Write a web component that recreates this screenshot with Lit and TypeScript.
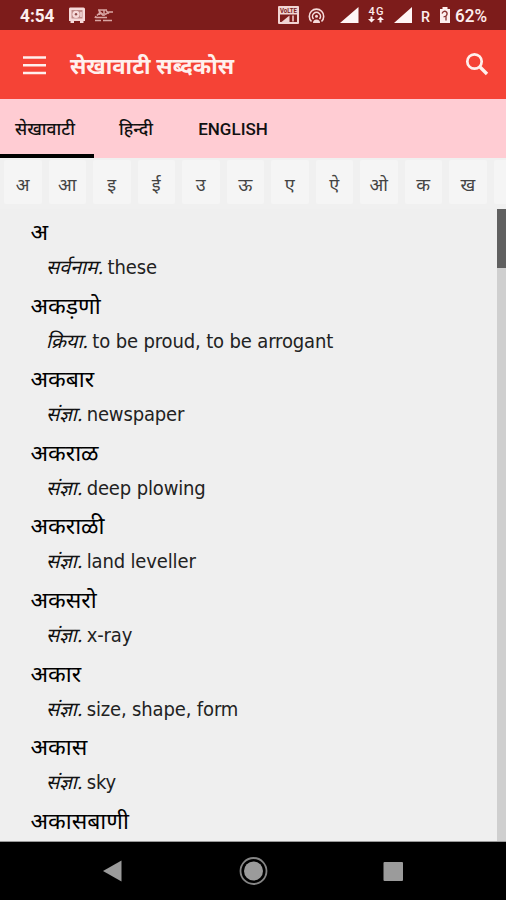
import { LitElement, html, css } from 'lit';
import { customElement } from 'lit/decorators.js';

const LETTERS = ['अ', 'आ', 'इ', 'ई', 'उ', 'ऊ', 'ए', 'ऐ', 'ओ', 'क', 'ख', ''];
const ENTRIES = [
  ['अ', 'सर्वनाम.', 'these'],
  ['अकड़णो', 'क्रिया.', 'to be proud, to be arrogant'],
  ['अकबार', 'संज्ञा.', 'newspaper'],
  ['अकराळ', 'संज्ञा.', 'deep plowing'],
  ['अकराळी', 'संज्ञा.', 'land leveller'],
  ['अकसरो', 'संज्ञा.', 'x-ray'],
  ['अकार', 'संज्ञा.', 'size, shape, form'],
  ['अकास', 'संज्ञा.', 'sky'],
  ['अकासबाणी', '', ''],
];

@customElement('status-bar')
class StatusBar extends LitElement {
  static styles = css`
    :host { display: block; height: 30px; background: #7d1c1b; }
    svg { display: block; }
    text { font-family: Roboto, sans-serif; fill: #fdeeee; font-weight: 500; }
    .time { font-size: 18px; font-weight: 700; }
    .battery { font-size: 18.500px; }
    .small { font-size: 11px; }
    .roam { font-size: 15px; }
    .volte { font-size: 6.500px; font-weight: 700; fill: #7d1c1b; }
  `;
  render() {
    return html`<svg width="506" height="30" viewBox="0 0 506 30">
      <text class="time" x="20" y="22" textLength="34.500" lengthAdjust="spacingAndGlyphs">4:54</text>
      <g fill="#f6dada">
        <path d="M70 7.500h13.500a1.500 1.500 0 0 1 1.500 1.500v12h-1.500v2h-3.500v-2h-6v2h-3.500v-2H69V9a1.500 1.500 0 0 1 1-1.500z"/>
        <path d="M71.500 10h11v8.500h-11z" fill="#c08b89"/>
        <circle cx="76" cy="14.300" r="3.600"/><circle cx="76" cy="14.300" r="1.200" fill="#8f4a49"/>
        <path d="M81 12v5" stroke="#f6dada" stroke-width="1.500"/>
      </g>
      <g fill="none" stroke="#d9a6a4" stroke-width="1.500">
        <path d="M98 10h9M99.500 10v5M97 15.500q3-4.500 6 0M104 10v6M105 14.500l4-2.500h4M96 17.500h11M95 20.500h6M103 20.500h9"/>
        <path d="M99 11l4 3.500M106 10.500l3 3M96 16l-1 2" />
      </g>
      <rect x="278" y="6" width="21" height="18" rx="1" fill="#f2d4d3"/>
      <text class="volte" x="280" y="12.500" textLength="17" lengthAdjust="spacingAndGlyphs">VoLTE</text>
      <path d="M280 14.500h17v7.500h-17z" fill="#7d1c1b"/>
      <path d="M281.500 22l8-6.500V22z" fill="#f2d4d3"/><path d="M292 15.500h2v6h-2z" fill="#d9a6a4"/>
      <g fill="none" stroke="#f6dada" stroke-width="1.600">
        <path d="M311.500 21.500a7.200 7.200 0 1 1 10 0"/><path d="M313.500 19a4 4 0 1 1 6 0"/>
      </g>
      <circle cx="316.500" cy="16.300" r="1.500" fill="#f6dada"/>
      <path d="M313 23q0-3.500 3.500-3.500T320 23z" fill="#f6dada"/>
      <path d="M340 23L358.500 7v16zM394 23L412 7v16z" fill="#fff6f6"/>
      <text class="small" x="368.500" y="14.500" textLength="15">4G</text>
      <path d="M371.500 22.500l-3.500-3.500h2.500v-2.500h2V19h2.500zM380.500 16.500l-3.500 3.500h2.500v2.500h2V20h2.500z" fill="#fdeeee"/>
      <text class="roam" x="421" y="21.500" textLength="9" lengthAdjust="spacingAndGlyphs">R</text>
      <path d="M442.500 7h5v2h2.500v14h-10V9h2.500z" fill="#fdeeee"/>
      <path d="M442 13.500q2-3.500 4.500-1.500 1.500 2-.5 4l-2.500 1M446 16.500v4" fill="none" stroke="#8a3433" stroke-width="1.300"/>
      <text class="battery" x="455" y="22" textLength="32" lengthAdjust="spacingAndGlyphs">62%</text>
    </svg>`;
  }
}

@customElement('nav-bar')
class NavBar extends LitElement {
  static styles = css`
    :host { display: block; height: 58px; background: #000; flex: none; }
    svg { display: block; }
  `;
  render() {
    return html`<svg width="506" height="58" viewBox="0 0 506 58" fill="#9b9b9b">
      <path d="M103 29L121.500 18.500v21z"/>
      <circle cx="253.500" cy="29" r="9.500"/>
      <circle cx="253.500" cy="29" r="13" fill="none" stroke="#858585" stroke-width="1.800"/>
      <rect x="383.500" y="20" width="19.500" height="19" rx="1"/>
    </svg>`;
  }
}

@customElement('app-root')
class AppRoot extends LitElement {
  static styles = css`
    :host {
      display: flex; flex-direction: column; width: 506px; height: 900px; overflow: hidden;
      background: #efefef; color: #111;
      font-family: 'Noto Sans', 'Noto Sans Devanagari', sans-serif;
    }
    status-bar, header, .tabs, .letters { flex: none; }
    header {
      height: 69px; box-sizing: border-box; background: #f54336; display: flex; align-items: center;
      padding: 0 17px 0 23px; color: #fff0ed;
    }
    header svg { display: block; flex: none; }
    header svg:last-child { margin-bottom: 2px; }
    h1 { margin: 0 auto 0 24px; font-size: 22.150px; line-height: 30px; font-weight: 700; white-space: nowrap; }
    .tabs { height: 59px; background: #ffccd3; display: flex; }
    .tab {
      box-sizing: border-box; height: 59px; line-height: 58px; font-size: 17.500px; font-weight: 500;
      border-bottom: 4px solid transparent; text-align: center; white-space: nowrap;
    }
    .first { width: 94px; border-color: #000; padding-right: 4px; }
    .second { width: 84px; }
    .third { width: 110px; font-family: Roboto, sans-serif; font-size: 17px; line-height: 60px; }
    .letters { height: 51px; display: flex; gap: 7px; padding-left: 4px; box-sizing: border-box; overflow: hidden; background: #f0f0f0; }
    .letter {
      flex: none; width: 37.500px; height: 44px; margin-top: 2px; line-height: 49px; text-align: center;
      font-size: 18px; color: #444; background: #f5f5f5; border-radius: 2px;
    }
    .body { flex: 1; min-height: 0; display: flex; overflow: hidden; border-bottom: 1px solid #999; box-sizing: border-box; }
    .list { flex: 1; padding: 4px 0 0 30.500px; overflow: hidden; }
    .entry { height: 73.600px; white-space: nowrap; }
    .word { font-size: 23px; line-height: 36px; height: 36px; font-weight: 400; color: #000; }
    .gloss { font-size: 20px; line-height: 36px; height: 36px; padding-left: 15.500px; display: flex; gap: 4.500px; color: #222; }
    .pos { font-family: 'Noto Sans Devanagari', sans-serif; font-style: italic; font-size: 19.600px; line-height: 40px; color: #111; }
    .meaning { font-family: 'DejaVu Sans Condensed', 'DejaVu Sans', sans-serif; font-stretch: condensed; letter-spacing: -0.140px; }
    .track { width: 9px; background: #cfcfcf; }
    .thumb { height: 59px; background: #606060; }
  `;
  render() {
    return html`
      <status-bar></status-bar>
      <header>
        <svg width="23" height="20" viewBox="0 0 23 20"><path d="M0 2.500h23M0 10.300h23M0 18h23" stroke="currentColor" stroke-width="2.500"/></svg>
        <h1>सेखावाटी सब्दकोस</h1>
        <svg width="24" height="24" viewBox="0 0 24 24" fill="none" stroke="currentColor"><circle cx="9.500" cy="9.500" r="7.200" stroke-width="2.700"/><path d="M14.500 14.500l7.500 7.500" stroke-width="3.300"/></svg>
      </header>
      <nav class="tabs">
        <div class="tab first">सेखावाटी</div>
        <div class="tab second">हिन्दी</div>
        <div class="tab third">ENGLISH</div>
      </nav>
      <div class="letters">${LETTERS.map((l) => html`<div class="letter">${l}</div>`)}</div>
      <div class="body">
        <div class="list">
          ${ENTRIES.map(([word, pos, meaning]) => html`<div class="entry">
            <div class="word">${word}</div>
            <div class="gloss"><span class="pos">${pos}</span><span class="meaning">${meaning}</span></div>
          </div>`)}
        </div>
        <div class="track"><div class="thumb"></div></div>
      </div>
      <nav-bar></nav-bar>
    `;
  }
}
